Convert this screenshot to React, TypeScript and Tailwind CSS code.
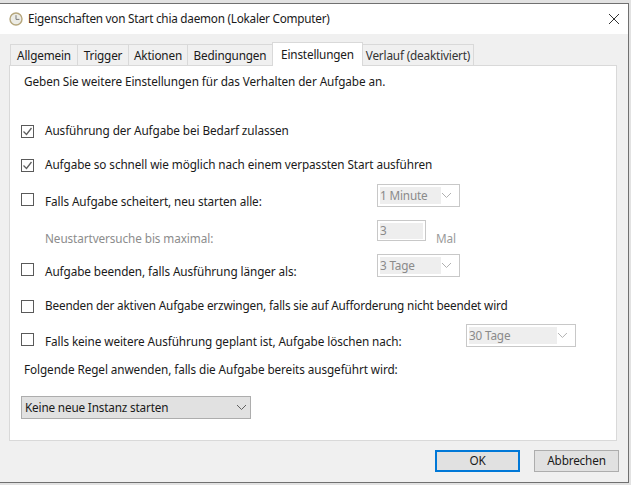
import React from 'react';

const tabs = [
  { label: 'Allgemein', width: 'w-[68px]' },
  { label: 'Trigger', width: 'w-[52px]' },
  { label: 'Aktionen', width: 'w-[60px]' },
  { label: 'Bedingungen', width: 'w-[86px]' },
];

const Chevron: React.FC<{ color?: string }> = ({ color = '#a0a0a0' }) => (
  <svg width="11" height="7" viewBox="0 0 11 7" fill="none">
    <path d="M1 1l4.5 4.5L10 1" stroke={color} strokeWidth="1" />
  </svg>
);

const Checkbox: React.FC<{ checked?: boolean; className?: string }> = ({ checked, className = '' }) => (
  <span className={`flex h-[13px] w-[13px] shrink-0 items-center justify-center border border-[#5a5a5a] bg-white ${className}`}>
    {checked && (
      <svg width="11" height="11" viewBox="0 0 11 11" fill="none">
        <path d="M1.5 5.5l3 3 5-6.5" stroke="#5f5f5f" strokeWidth="1.3" />
      </svg>
    )}
  </span>
);

const DisabledSelect: React.FC<{ value: string; width: string; fill: string }> = ({ value, width, fill }) => (
  <div className={`flex h-[23px] shrink-0 items-center justify-between border border-[#c8c8c8] bg-white pl-[2px] pr-[7px] tracking-[-0.17px] ${width}`}>
    <span className={`flex h-[17px] items-center bg-[#eeeeee] text-[#8a8a8a] ${fill}`}>{value}</span>
    <Chevron color="#b0b0b0" />
  </div>
);

const App: React.FC = () => {
  return (
    <div className="h-[485px] w-[631px] overflow-hidden bg-[#e2e2e2] pb-[2px] pr-[2px] pt-[3px] font-['Noto_Sans',sans-serif] text-[11.75px] tracking-[-0.17px] text-[#1a1a1a]">
      <div className="flex h-full flex-col border-b border-r border-t border-[#707070] bg-[#f0f0f0]">
        {/* title bar */}
        <div className="flex h-[30px] shrink-0 items-center justify-between bg-white pl-[9px] pr-[8px]">
          <div className="flex items-center gap-[5px]">
            <svg width="14" height="14" viewBox="0 0 14 14" fill="none">
              <circle cx="7" cy="7" r="6" fill="#ecece6" stroke="#b5a67c" strokeWidth="1.4" />
              <path d="M7 3.2V7.4H10.4" stroke="#7a7a7a" strokeWidth="1" />
            </svg>
            <span className="tracking-[-0.245px]">Eigenschaften von Start chia daemon (Lokaler Computer)</span>
          </div>
          <svg width="12" height="12" viewBox="0 0 12 12" fill="none">
            <path d="M1 1l10 10M11 1L1 11" stroke="#333333" strokeWidth="1" />
          </svg>
        </div>

        {/* tabs */}
        <div className="flex h-[31px] shrink-0 items-end pl-[10px]">
          {tabs.map((tab) => (
            <div
              key={tab.label}
              className={`-mr-px flex h-[21px] items-center justify-center whitespace-nowrap border border-b-0 border-[#d9d9d9] bg-[#f0f0f0] pt-[2px] ${tab.width}`}
            >
              {tab.label}
            </div>
          ))}
          <div className="z-10 -mb-px -mr-px flex h-[24px] w-[91px] items-center justify-center whitespace-nowrap border border-b-0 border-[#d9d9d9] bg-white">
            Einstellungen
          </div>
          <div className="flex h-[21px] w-[112px] items-center justify-center whitespace-nowrap border border-b-0 border-[#d9d9d9] bg-[#f0f0f0] pt-[2px] text-[#333333]">
            Verlauf (deaktiviert)
          </div>
        </div>

        {/* settings panel */}
        <div className="ml-[9px] h-[376px] w-[608px] shrink-0 border border-[#d9d9d9] bg-white pl-[11px] tracking-[-0.09px]">
          <div className="flex h-[32px] items-center pl-[3px]">Geben Sie weitere Einstellungen für das Verhalten der Aufgabe an.</div>

          <div className="mt-[23px] flex h-[20px] items-center gap-[11px]">
            <Checkbox checked />
            <span>Ausführung der Aufgabe bei Bedarf zulassen</span>
          </div>

          <div className="mt-[14px] flex h-[20px] items-center gap-[11px]">
            <Checkbox checked />
            <span>Aufgabe so schnell wie möglich nach einem verpassten Start ausführen</span>
          </div>

          <div className="mt-[9px] flex h-[23px]">
            <div className="flex w-[356px] items-end gap-[11px]">
              <Checkbox className="mb-[1px]" />
              <span className="-mb-[2px] leading-[16px]">Falls Aufgabe scheitert, neu starten alle:</span>
            </div>
            <DisabledSelect value="1 Minute" width="w-[83px]" fill="w-[61px]" />
          </div>

          <div className="mt-[13px] flex h-[21px]">
            <div className="flex w-[356px] items-end pl-[24px] text-[#8c8c8c]">
              <span className="-mb-[5px] leading-[16px]">Neustartversuche bis maximal:</span>
            </div>
            <div className="flex h-[21px] w-[49px] items-center border border-[#c8c8c8] bg-white px-[2px]">
              <span className="flex h-[16px] w-full items-center bg-[#eeeeee] text-[#8a8a8a]">3</span>
            </div>
            <span className="-mb-[7px] ml-[10px] self-end text-[#9a9a9a]">Mal</span>
          </div>

          <div className="mt-[13px] flex h-[23px]">
            <div className="flex w-[356px] items-end gap-[11px]">
              <Checkbox className="mb-[1px]" />
              <span className="-mb-[2px] leading-[16px]">Aufgabe beenden, falls Ausführung länger als:</span>
            </div>
            <DisabledSelect value="3 Tage" width="w-[83px]" fill="w-[61px]" />
          </div>

          <div className="mt-[19px] flex h-[20px] items-center gap-[11px]">
            <Checkbox />
            <span className="tracking-[-0.17px]">Beenden der aktiven Aufgabe erzwingen, falls sie auf Aufforderung nicht beendet wird</span>
          </div>

          <div className="mt-[8px] flex h-[23px]">
            <div className="flex w-[445px] items-end gap-[11px]">
              <Checkbox className="mb-[1px]" />
              <span className="-mb-[2px] leading-[16px]">Falls keine weitere Ausführung geplant ist, Aufgabe löschen nach:</span>
            </div>
            <DisabledSelect value="30 Tage" width="w-[110px]" fill="w-[89px]" />
          </div>

          <div className="mt-[13px] flex h-[20px] items-center pl-[3px]">Folgende Regel anwenden, falls die Aufgabe bereits ausgeführt wird:</div>

          <div className="mt-[16px] flex h-[23px] w-[230px] items-center justify-between border border-[#adadad] bg-[#e1e1e1] pl-[3px] pr-[3px] tracking-[-0.17px]">
            <span>Keine neue Instanz starten</span>
            <Chevron color="#606060" />
          </div>
        </div>

        {/* buttons */}
        <div className="flex justify-end gap-[14px] pr-[9px] pt-[9px]">
          <button className="h-[22px] w-[85px] border-2 border-[#0078d7] bg-[#e1e1e1]">OK</button>
          <button className="h-[22px] w-[85px] border border-[#adadad] bg-[#e1e1e1]">Abbrechen</button>
        </div>
      </div>
    </div>
  );
};

export default App;
